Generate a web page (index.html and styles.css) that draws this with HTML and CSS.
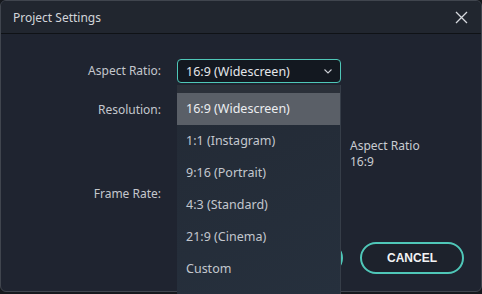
FILE: index.html
```html
<!DOCTYPE html>
<html lang="en">
  <head>
    <meta charset="UTF-8" />
    <meta name="viewport" content="width=device-width, initial-scale=1.0" />
    <title>Project Settings</title>
    <link rel="stylesheet" href="styles.css">
  </head>
  <body>
    <div class="dialog">
      <div class="dialog-header">
        <span class="dialog-title">Project Settings</span>
        <button class="close-btn" aria-label="Close">
          <svg width="13" height="13" viewBox="0 0 13 13">
            <path d="M1 1 L12 12 M12 1 L1 12" stroke="#d6d9de" stroke-width="1.3" fill="none" />
          </svg>
        </button>
      </div>

      <div class="settings-form">
        <label class="field-label">Aspect Ratio:</label>
        <div class="select-box">
          <span>16:9 (Widescreen)</span>
          <svg width="8" height="5" viewBox="0 0 8 5">
            <polyline points="0.5,0.5 4,4 7.5,0.5" stroke="#c9ccd2" stroke-width="1.1" fill="none" />
          </svg>
        </div>

        <label class="field-label row-2">Resolution:</label>
        <div class="res-field row-2"></div>

        <div class="preview-info">
          <div>Aspect Ratio</div>
          <div>16:9</div>
        </div>

        <label class="field-label row-4">Frame Rate:</label>
        <div class="res-field row-4"></div>
      </div>

      <div class="dialog-footer">
        <button class="btn btn-ok">OK</button>
        <button class="btn btn-cancel">CANCEL</button>
      </div>

      <!-- open dropdown of the aspect ratio select -->
      <ul class="dropdown">
        <li class="selected">16:9 (Widescreen)</li>
        <li>1:1 (Instagram)</li>
        <li>9:16 (Portrait)</li>
        <li>4:3 (Standard)</li>
        <li>21:9 (Cinema)</li>
        <li>Custom</li>
      </ul>
    </div>
  </body>
</html>
```

FILE: styles.css
```css
body {
  margin: 0;
  background-color: #15181d;
  font-family: "Noto Sans", "Open Sans", sans-serif;
  font-size: 12px;
  color: #c9ccd2;
  overflow: hidden;
}

.dialog {
  position: relative;
  height: 292px;
  box-sizing: border-box;
  border: 1px solid #40454e;
  border-radius: 6px;
  background-color: #1f2430;
  overflow: hidden;
}

.dialog-header {
  height: 32px;
  display: flex;
  align-items: center;
  justify-content: space-between;
  padding: 0 13px 0 12px;
  background-color: #21262f;
  border-bottom: 1px solid #0f1216;
}

.dialog-title {
  font-size: 12px;
  color: #d2d5da;
}

.close-btn {
  background: none;
  border: none;
  padding: 0;
  display: flex;
  cursor: pointer;
}

.settings-form {
  display: grid;
  grid-template-columns: 160px 164px 1fr;
  grid-template-rows: 24px 24px 30px 24px;
  column-gap: 16px;
  row-gap: 15px;
  padding-top: 25px;
}

.field-label {
  grid-column: 1;
  text-align: right;
  line-height: 24px;
  color: #c4c7cd;
}

.row-2 {
  grid-row: 2;
}

.row-4 {
  grid-row: 4;
}

.res-field {
  grid-column: 2;
}

.select-box {
  grid-column: 2;
  display: flex;
  align-items: center;
  justify-content: space-between;
  padding: 0 8px 0 8px;
  border: 1px solid #4fc7b8;
  border-radius: 4px;
  background-color: #131820;
  color: #e4e6ea;
  font-size: 12.5px;
}

.preview-info {
  grid-column: 3;
  grid-row: 3;
  margin-top: 1px;
  margin-left: -7px;
  line-height: 16px;
  color: #c9ccd2;
}

.dialog-footer {
  position: absolute;
  right: 17px;
  top: 241px;
  display: flex;
  gap: 17px;
}

.btn {
  width: 104px;
  height: 32px;
  border-radius: 16px;
  font-family: "Liberation Sans", Arial, sans-serif;
  font-size: 12px;
  font-weight: bold;
  cursor: pointer;
}

.btn-ok {
  border: 2px solid #4fc7b8;
  background-color: #4fc7b8;
  color: #14181f;
}

.btn-cancel {
  border: 2px solid #4fc7b8;
  background-color: #1d222c;
  color: #f2f3f5;
}

.dropdown {
  position: fixed;
  left: 177px;
  top: 85px;
  width: 164px;
  height: 209px;
  margin: 0;
  padding: 8px 0 0 0;
  list-style: none;
  box-sizing: border-box;
  background: linear-gradient(160deg, #232a35 0%, #26303d 100%);
  border-right: 1px solid #363d48;
  box-shadow: inset 0 8px 0 #2b3039;
  font-size: 12.5px;
  color: #c3c7ce;
}

.dropdown li {
  height: 32px;
  line-height: 32px;
  padding-left: 9px;
}

.dropdown li.selected {
  background-color: #5a5f67;
  color: #eceef1;
}
```
